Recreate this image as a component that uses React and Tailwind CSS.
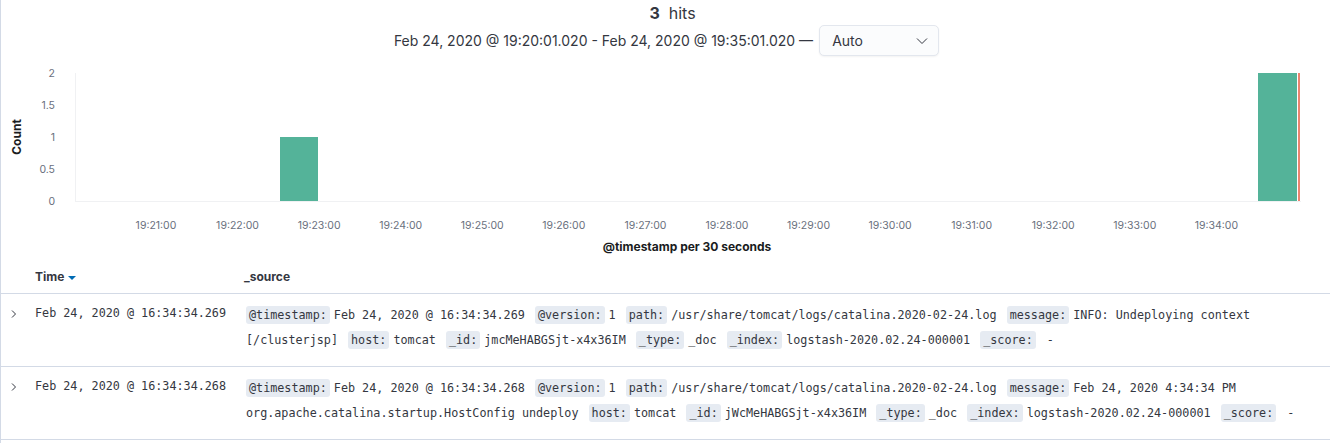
import React from "react";

const ticks = [
  "19:21:00","19:22:00","19:23:00","19:24:00","19:25:00","19:26:00","19:27:00",
  "19:28:00","19:29:00","19:30:00","19:31:00","19:32:00","19:33:00","19:34:00",
];
const yTicks = [["2", 13], ["1.5", 45], ["1", 77], ["0.5", 109], ["0", 141]];

function Chart() {
  const ff = { fontFamily: "Inter, 'Noto Sans', sans-serif" };
  return (
    <svg width="1330" height="200" className="block" style={ff}>
      <text x="15" y="77" transform="rotate(-90 15 77)" textAnchor="middle" dominantBaseline="central" fontWeight="700" fontSize="12" fill="#1a1c21">Count</text>
      {yTicks.map(([l, y]) => (
        <text key={l} x="54" y={y} textAnchor="end" dominantBaseline="central" fontSize="10.5" fill="#69707d">{l}</text>
      ))}
      <line x1="74.5" y1="13" x2="74.5" y2="141" stroke="#f0f1f3" />
      <line x1="74" y1="141.5" x2="1300" y2="141.5" stroke="#f0f1f3" />
      <rect x="279" y="77" width="38" height="64" fill="#54b399" />
      <rect x="1257" y="13" width="39" height="128" fill="#54b399" />
      <rect x="1297" y="13" width="2" height="128" fill="#e7664c" opacity="0.8" />
      {ticks.map((t, i) => (
        <text key={t} x={155 + 81.57 * i} y="165" textAnchor="middle" dominantBaseline="central" fontSize="10.5" fill="#69707d">{t}</text>
      ))}
      <text x="686" y="186" textAnchor="middle" dominantBaseline="central" fontWeight="700" fontSize="12" fill="#1a1c21">@timestamp per 30 seconds</text>
    </svg>
  );
}

const mono = { fontFamily: "'DejaVu Sans Mono', 'Liberation Mono', monospace" };

function Field({ k, v }) {
  return (
    <>
      <span className="bg-[#e6ebf2] rounded-[3px] px-[3px] py-[2px] mr-[4px]">{k}</span>
      <span className="mr-[3px]">{v}</span>{" "}
    </>
  );
}

function Chevron() {
  return (
    <svg width="8" height="10" viewBox="0 0 8 10" className="block">
      <path d="M2 1.5 L5.5 5 L2 8.5" fill="none" stroke="#343741" strokeWidth="1" />
    </svg>
  );
}

function Row({ time, fields }) {
  return (
    <div className="flex border-b border-[#d3dae6] pt-[7px] pb-[13px]">
      <div className="w-[34px] pl-[9px] pt-[8px]">
        <Chevron />
      </div>
      <div className="w-[209px] text-[11.75px] leading-[25px] text-[#343741]" style={mono}>
        {time}
      </div>
      <div className="flex-1 pl-[2px] pr-[10px] text-[11.75px] leading-[25px] text-[#343741] pt-[2px]" style={mono}>
        {fields.map(([k, v], i) => (
          <Field key={i} k={k} v={v} />
        ))}
      </div>
    </div>
  );
}

export default function App() {
  const sans = { fontFamily: "Inter, 'Noto Sans', sans-serif" };
  return (
    <div className="w-[1330px] h-[443px] bg-white border-l border-[#d3dae6] overflow-hidden" style={sans}>
      <div className="h-[25px] flex items-center justify-center pl-[14px] text-[16px] text-[#343741]">
        <span className="font-bold mr-[9px]">3</span>
        <span>hits</span>
      </div>
      <div className="h-[31px] flex items-center justify-center text-[14px] text-[#343741] pl-[2px]">
        <span className="mr-[6px]">Feb 24, 2020 @ 19:20:01.020 - Feb 24, 2020 @ 19:35:01.020 —</span>
        <div className="w-[120px] h-[31px] border border-[#e3e7ee] rounded-[5px] bg-[#fbfcfd] flex items-center justify-between pl-[12px] pr-[10px] shadow-[0_1px_2px_rgba(0,0,0,0.05)]">
          <span>Auto</span>
          <svg width="12" height="8" viewBox="0 0 12 8">
            <path d="M1 1.5 L6 6.5 L11 1.5" fill="none" stroke="#343741" strokeWidth="1" />
          </svg>
        </div>
      </div>
      <div className="h-[4px]" />
      <Chart />
      <div className="h-[34px] flex items-center border-b border-[#d3dae6] text-[12px] font-bold text-[#343741]">
        <div className="w-[34px]" />
        <div className="w-[209px] flex items-center">
          <span>Time</span>
          <svg width="8" height="5" viewBox="0 0 8 5" className="ml-[4px] mt-[3px]">
            <path d="M0 0 L8 0 L4 4 Z" fill="#006bb4" />
          </svg>
        </div>
        <div className="flex-1">_source</div>
      </div>
      <Row
        time="Feb 24, 2020 @ 16:34:34.269"
        fields={[
          ["@timestamp:", "Feb 24, 2020 @ 16:34:34.269"],
          ["@version:", "1"],
          ["path:", "/usr/share/tomcat/logs/catalina.2020-02-24.log"],
          ["message:", "INFO: Undeploying context [/clusterjsp]"],
          ["host:", "tomcat"],
          ["_id:", "jmcMeHABGSjt-x4x36IM"],
          ["_type:", "_doc"],
          ["_index:", "logstash-2020.02.24-000001"],
          ["_score:", "\u00a0-"],
        ]}
      />
      <Row
        time="Feb 24, 2020 @ 16:34:34.268"
        fields={[
          ["@timestamp:", "Feb 24, 2020 @ 16:34:34.268"],
          ["@version:", "1"],
          ["path:", "/usr/share/tomcat/logs/catalina.2020-02-24.log"],
          ["message:", "Feb 24, 2020 4:34:34 PM org.apache.catalina.startup.HostConfig undeploy"],
          ["host:", "tomcat"],
          ["_id:", "jWcMeHABGSjt-x4x36IM"],
          ["_type:", "_doc"],
          ["_index:", "logstash-2020.02.24-000001"],
          ["_score:", "\u00a0-"],
        ]}
      />
    </div>
  );
}
